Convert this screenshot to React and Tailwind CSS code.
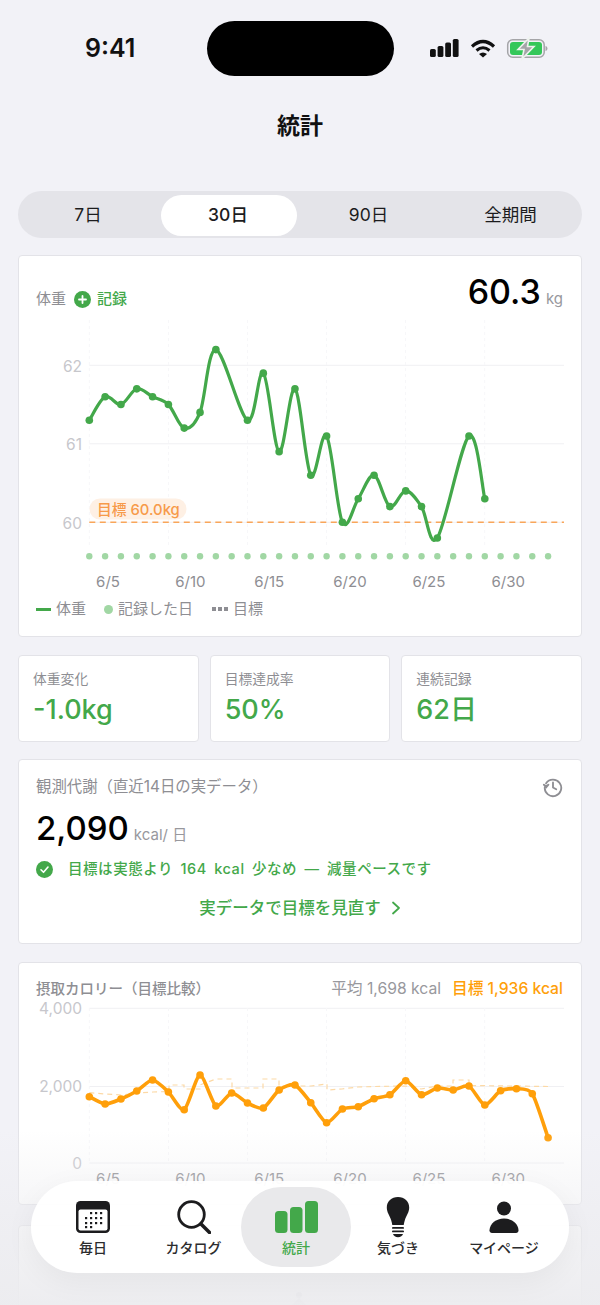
import React from 'react';

const GREEN = '#43a84a';
const ORANGE = '#ff9f0a';

const xAt = (i) => 89.3 + i * 15.82;

// catmull-rom through the points, like the chart lib's smooth line
const smoothPath = (pts, t = 0.5) => {
    let d = `M${pts[0][0]} ${pts[0][1]}`;
    for (let i = 0; i < pts.length - 1; i++) {
        const p0 = pts[i - 1] || pts[i];
        const p1 = pts[i];
        const p2 = pts[i + 1];
        const p3 = pts[i + 2] || p2;
        const k = t / 3;
        const c1x = p1[0] + (p2[0] - p0[0]) * k;
        const c1y = p1[1] + (p2[1] - p0[1]) * k;
        const c2x = p2[0] - (p3[0] - p1[0]) * k;
        const c2y = p2[1] - (p3[1] - p1[1]) * k;
        d += ` C${c1x.toFixed(1)} ${c1y.toFixed(1)} ${c2x.toFixed(1)} ${c2y.toFixed(1)} ${p2[0].toFixed(1)} ${p2[1].toFixed(1)}`;
    }
    return d;
};

const weightData = [
    [0, 61.3], [1, 61.6], [2, 61.5], [3, 61.7], [4, 61.6], [5, 61.5], [6, 61.2], [7, 61.4], [8, 62.2],
    [10, 61.3], [11, 61.9], [12, 60.9], [13, 61.7], [14, 60.6], [15, 61.1], [16, 60.0], [17, 60.3],
    [18, 60.6], [19, 60.2], [20, 60.4], [21, 60.2], [22, 59.8], [24, 61.1], [25, 60.3],
];
const weightPts = weightData.map(([i, v]) => [xAt(i), 522.3 - (v - 60) * 78.5]);

const calorieY = [
    1096.7, 1104, 1099, 1091, 1080, 1092, 1109.7, 1075, 1106, 1093, 1103, 1108, 1090, 1085, 1102.7,
    1122.7, 1109, 1106.7, 1098.7, 1094.7, 1080.7, 1094.7, 1088, 1090, 1086, 1105, 1090.7, 1088.7, 1093.7, 1137.7,
];
const caloriePts = calorieY.map((y, i) => [xAt(i), y]);

const targetLine =
    'M89.3 1092.7 L105 1094 L121 1095 L137 1093 L153 1092 L169 1091.5 V1085 H184 V1089 H200 V1085 L216 1079 H232 V1088 H263 V1079 H279 V1086 H311 L327 1084 V1090 L342 1089 L358 1087 L374 1086.5 L406 1086 L421 1089 L437 1086 H453 V1080 H469 V1085.5 L548 1086.5';

const gridX = [89.3, 168.4, 247.4, 326.5, 405.6, 484.7];
const dateLabels = ['6/5', '6/10', '6/15', '6/20', '6/25', '6/30'];

const ChartText = ({ x, y, anchor = 'start', size = 15.5, fill = '#c7c7cc', children }) => (
    <text x={x} y={y} textAnchor={anchor} fontSize={size} fill={fill}>{children}</text>
);

const WeightChart = () => (
    <svg className="absolute left-0 top-0" width="600" height="640" viewBox="0 0 600 640">
        {[365.3, 443.8, 522.3].map((y) => (
            <line key={y} x1="89.3" x2="564" y1={y} y2={y} stroke="#f0f0f3" />
        ))}
        {gridX.map((x) => (
            <line key={x} x1={x} x2={x} y1="320" y2="548" stroke="#f7f7f9" strokeDasharray="3 3" />
        ))}
        <ChartText x="82" y="371.5" anchor="end">62</ChartText>
        <ChartText x="82" y="450" anchor="end">61</ChartText>
        <ChartText x="82" y="528.5" anchor="end">60</ChartText>
        <line x1="89.3" x2="564" y1="522.3" y2="522.3" stroke="#f9a65a" strokeWidth="1.4" strokeDasharray="6 4.5" />
        <rect x="89.5" y="498.5" width="97" height="21" rx="10.5" fill="#fef0e4" />
        <text x="97" y="514.5" fontSize="14.8" fontWeight="500" fill="#f79a4a">目標 60.0kg</text>
        {Array.from({ length: 30 }, (_, i) => (
            <circle key={i} cx={xAt(i)} cy="556.3" r="3.2" fill="#a1d7a4" />
        ))}
        <path d={smoothPath(weightPts)} fill="none" stroke={GREEN} strokeWidth="3.2" strokeLinejoin="round" />
        {weightPts.map(([x, y]) => (
            <circle key={x} cx={x} cy={y} r="3.8" fill={GREEN} />
        ))}
        {dateLabels.map((label, i) => (
            <ChartText key={label} x={gridX[i] + 6.8} y="587" size="15" fill="#8e8e93">{label}</ChartText>
        ))}
    </svg>
);

const CalorieChart = () => (
    <svg className="absolute left-0 top-0" width="600" height="1305" viewBox="0 0 600 1305">
        {[1008.3, 1086.5, 1163].map((y) => (
            <line key={y} x1="89.3" x2="564" y1={y} y2={y} stroke="#f0f0f3" />
        ))}
        {gridX.map((x) => (
            <line key={x} x1={x} x2={x} y1="1008" y2="1163" stroke="#f7f7f9" strokeDasharray="3 3" />
        ))}
        <ChartText x="82" y="1014" anchor="end">4,000</ChartText>
        <ChartText x="82" y="1092" anchor="end">2,000</ChartText>
        <ChartText x="82" y="1169" anchor="end">0</ChartText>
        <path d={targetLine} fill="none" stroke="#fcd9a6" strokeWidth="1.2" strokeDasharray="5 4" />
        <path d={smoothPath(caloriePts, 0.35)} fill="none" stroke={ORANGE} strokeWidth="3.6" strokeLinejoin="round" />
        {caloriePts.map(([x, y]) => (
            <circle key={x} cx={x} cy={y} r="3.8" fill={ORANGE} />
        ))}
        {dateLabels.map((label, i) => (
            <ChartText key={label} x={gridX[i] + 6.8} y="1184" size="15" fill="#8e8e93">{label}</ChartText>
        ))}
        <circle cx="299" cy="1295" r="3" fill="#d8d8dc" />
        <path d="M292 1305 L299 1298 L306 1305" fill="#e0e0e4" />
    </svg>
);

const StatCard = ({ label, value }) => (
    <div className="h-[87px] rounded-[4px] border-[1.5px] border-[#e3e3e8] bg-white pl-[14px] pt-[13px]">
        <div className="text-[13.8px] leading-5 text-[#8e8e93]">{label}</div>
        <div className="mt-[5px] text-[27px] font-medium leading-8 text-[#43a84a]">{value}</div>
    </div>
);

const StatusBar = () => (
    <div className="relative h-[76px]">
        <div className="absolute left-[85px] top-[32px] text-[25px] font-semibold leading-8 text-[#111]">9:41</div>
        <div className="absolute left-[207px] top-[21px] h-[55px] w-[187px] rounded-[28px] bg-black" />
        <svg className="absolute left-[428px] top-[36px]" width="124" height="26" viewBox="0 0 124 26">
            <rect x="2" y="13" width="5.8" height="8" rx="1.6" fill="#111" />
            <rect x="9.6" y="10" width="5.8" height="11" rx="1.6" fill="#111" />
            <rect x="17.2" y="6.5" width="5.8" height="14.5" rx="1.6" fill="#111" />
            <rect x="24.8" y="3" width="5.8" height="18" rx="1.6" fill="#111" />
            <path d="M44 10.5 Q55 0.5 66 10.5" fill="none" stroke="#111" strokeWidth="3.2" />
            <path d="M48.5 14.5 Q55 9 61.5 14.5" fill="none" stroke="#111" strokeWidth="3" />
            <path d="M51 18 Q55 15 59 18 L55 21.5z" fill="#111" />
            <rect x="79.7" y="3.7" width="36.5" height="17.6" rx="5" fill="none" stroke="#a5a5a8" strokeWidth="1.5" />
            <rect x="82" y="6" width="32" height="13" rx="3" fill="#34c759" />
            <path d="M117.5 10v5c1.200-.3 2-1.300 2-2.500s-.8-2.200-2-2.500z" fill="#a5a5a8" />
            <path d="M101 2 90 13.500h6L94 23l12-12.500h-6.500z" fill="#a5a5a8" stroke="#eef3ee" strokeWidth="1.6" />
        </svg>
    </div>
);

const CalendarIcon = () => (
    <svg width="34" height="32" viewBox="0 0 34 32">
        <rect x="0" y="0" width="34" height="32" rx="4.5" fill="#1c1c1e" />
        <rect x="2.5" y="8.5" width="29" height="21" rx="2" fill="#fff" />
        {[[15, 12], [20, 12], [25, 12], [10, 17], [15, 17], [20, 17], [25, 17], [10, 22], [15, 22], [20, 22], [25, 22], [10, 26], [15, 26]].map(([x, y]) => (
            <rect key={`${x}-${y}`} x={x - 1} y={y - 1} width="2.200" height="2.200" fill="#1c1c1e" />
        ))}
    </svg>
);

const SearchIcon = () => (
    <svg width="34" height="34" viewBox="0 0 34 34" fill="none" stroke="#1c1c1e" strokeLinecap="round">
        <circle cx="14.500" cy="14.500" r="12.800" strokeWidth="2.800" />
        <path d="M24 24 32.500 32.500" strokeWidth="3.600" />
    </svg>
);

const BarsIcon = () => (
    <svg width="43" height="32" viewBox="0 0 43 32" fill="#43a84a">
        <rect x="0" y="10" width="12.500" height="22" rx="3.500" />
        <rect x="15" y="6" width="12.500" height="26" rx="3.500" />
        <rect x="30" y="0" width="13" height="32" rx="3.500" />
    </svg>
);

const BulbIcon = () => (
    <svg width="24" height="42" viewBox="0 0 24 42" fill="#1c1c1e">
        <path d="M12 1C5.500 1 .8 5.600.8 11.500c0 4.800 2.800 8 4.300 12.500.5 1.500.8 3 1.200 5h11.400c.4-2 .7-3.500 1.200-5 1.500-4.500 4.300-7.700 4.300-12.500C23.200 5.600 18.500 1 12 1z" />
        <rect x="6" y="31" width="12" height="1.800" rx=".9" />
        <rect x="6" y="34.500" width="12" height="1.800" rx=".9" />
        <path d="M7 38h10c-.5 2-2.500 3.200-5 3.200S7.500 40 7 38z" />
    </svg>
);

const PersonIcon = () => (
    <svg width="30" height="32" viewBox="0 0 30 32" fill="#1c1c1e">
        <circle cx="15" cy="7.500" r="7" />
        <path d="M15 17.500C7 17.500 1 22.500.5 29c-.1 1.800 1 3 2.500 3h24c1.500 0 2.600-1.200 2.500-3C29 22.500 23 17.500 15 17.500z" />
    </svg>
);

const NavItem = ({ icon, label, active, className }) => (
    <div className={`flex h-[80px] flex-col items-center rounded-[40px] pt-[9px] ${active ? 'bg-[#e9e9eb]' : ''} ${className}`}>
        <div className="flex h-[42px] items-center">{icon}</div>
        <div className={`text-[14px] font-medium leading-5 whitespace-nowrap ${active ? 'text-[#43a84a]' : 'text-[#2c2c2e]'}`}>{label}</div>
    </div>
);

const BottomNav = () => (
    <>
        <div className="absolute inset-x-0 bottom-0 h-[175px] bg-gradient-to-b from-[#ececef]/0 via-[#ececef]/55 to-[#ececef]/95" />
        <div className="absolute left-[31px] top-[1181px] flex h-[92px] w-[538px] items-center rounded-[46px] bg-white/95 pl-[11px] shadow-[0_8px_30px_rgba(0,0,0,0.05)]">
            <NavItem className="w-[102px]" icon={<CalendarIcon />} label="毎日" />
            <NavItem className="ml-[2px] w-[95px]" icon={<SearchIcon />} label="カタログ" />
            <NavItem className="w-[110px]" icon={<BarsIcon />} label="統計" active />
            <NavItem className="w-[94px]" icon={<BulbIcon />} label="気づき" />
            <NavItem className="w-[118px]" icon={<PersonIcon />} label="マイページ" />
        </div>
    </>
);

const App = () => {
    return (
        <div className="relative h-[1305px] w-[600px] overflow-hidden bg-[#f2f2f7] font-['Inter','Noto_Sans_CJK_JP',sans-serif] text-[#111]">
            <StatusBar />
            <div className="mt-[32px] text-center text-[23px] font-semibold leading-9 text-[#111]">統計</div>

            <div className="mx-[18px] mt-[47px] flex h-[47px] items-center rounded-[24px] bg-[#e4e4e9] px-[3px] pt-[1px] text-[17.5px] text-[#1c1c1e]">
                <div className="w-[140px] pr-[6px] text-center">7日</div>
                <div className="flex h-[41px] w-[136px] items-center justify-center rounded-[21px] bg-white pr-[2px] font-medium">30日</div>
                <div className="w-[145px] pr-[2px] text-center">90日</div>
                <div className="w-[137px] text-center">全期間</div>
            </div>

            <div className="mx-[18px] mt-[17px] h-[382px] rounded-[4px] border-[1.5px] border-[#e3e3e8] bg-white">
                <div className="relative z-10 flex items-start justify-between pl-[17px] pr-[18px] pt-[16px]">
                    <div className="mt-[17px] flex items-center text-[15px] leading-5 text-[#8e8e93]">
                        <span>体重</span>
                        <svg className="ml-[8px]" width="17" height="17" viewBox="0 0 17 17">
                            <circle cx="8.500" cy="8.500" r="8.500" fill="#43a84a" />
                            <path d="M8.500 5v7M5 8.500h7" stroke="#fff" strokeWidth="1.800" strokeLinecap="round" />
                        </svg>
                        <span className="ml-[6px] font-medium text-[#43a84a]">記録</span>
                    </div>
                    <div className="flex items-baseline">
                        <span className="text-[34px] font-medium leading-10 text-black">60.3</span>
                        <span className="ml-[5px] text-[15px] text-[#98989d]">kg</span>
                    </div>
                </div>
                <div className="relative z-10 mt-[287px] flex items-center pl-[17px] text-[15px] leading-5 text-[#8e8e93]">
                    <span className="h-[3px] w-[15px] bg-[#43a84a]" />
                    <span className="ml-[5px]">体重</span>
                    <span className="ml-[18px] h-[9px] w-[9px] rounded-full bg-[#a1d7a4]" />
                    <span className="ml-[5px]">記録した日</span>
                    <span className="ml-[19px] flex gap-[2px]">
                        <i className="h-[4px] w-[4px] bg-[#8e8e93]" />
                        <i className="h-[4px] w-[4px] bg-[#8e8e93]" />
                        <i className="h-[4px] w-[4px] bg-[#8e8e93]" />
                    </span>
                    <span className="ml-[5px]">目標</span>
                </div>
            </div>

            <div className="mx-[18px] mt-[18px] grid grid-cols-3 gap-[11px]">
                <StatCard label="体重変化" value="-1.0kg" />
                <StatCard label="目標達成率" value="50%" />
                <StatCard label="連続記録" value="62日" />
            </div>

            <div className="mx-[18px] mt-[17px] h-[185px] rounded-[4px] border-[1.5px] border-[#e3e3e8] bg-white pl-[17px] pr-[17px] pt-[16px]">
                <div className="flex items-center justify-between">
                    <div className="text-[15.4px] leading-5 text-[#8e8e93]">観測代謝（直近14日の実データ）</div>
                    <svg width="22" height="22" viewBox="0 0 24 24" fill="none" stroke="#8e8e93" strokeWidth="2" strokeLinecap="round" strokeLinejoin="round">
                        <path d="M4.500 8A9 9 0 1 1 3 12.500" />
                        <path d="M2 9.500 4.500 12.500 7 9.500" fill="#8e8e93" />
                        <path d="M12 7v5.500l3.500 2" />
                    </svg>
                </div>
                <div className="mt-[10px] flex items-baseline">
                    <span className="text-[33px] font-medium leading-10 text-black">2,090</span>
                    <span className="ml-[5px] text-[15px] text-[#98989d]">kcal/ 日</span>
                </div>
                <div className="mt-[11px] flex items-center text-[14.5px] font-medium leading-5 tracking-[0.55px] text-[#43a84a] [word-spacing:3px]">
                    <svg width="17" height="17" viewBox="0 0 17 17">
                        <circle cx="8.500" cy="8.500" r="8.500" fill="#43a84a" />
                        <path d="M5 8.800 7.500 11.300 12 6" fill="none" stroke="#fff" strokeWidth="1.600" strokeLinecap="round" strokeLinejoin="round" />
                    </svg>
                    <span className="ml-[15px]">目標は実態より 164 kcal 少なめ — 減量ペースです</span>
                </div>
                <div className="mt-[19px] flex items-center justify-center text-[16.5px] font-medium leading-5 text-[#43a84a]">
                    <span>実データで目標を見直す</span>
                    <svg className="ml-[10px]" width="10" height="14" viewBox="0 0 10 14" fill="none" stroke="#43a84a" strokeWidth="1.800" strokeLinecap="round" strokeLinejoin="round">
                        <path d="M2 1.500 8 7 2 12.500" />
                    </svg>
                </div>
            </div>

            <div className="mx-[18px] mt-[18px] h-[243px] rounded-[4px] border-[1.5px] border-[#e3e3e8] bg-white pl-[17px] pr-[18px] pt-[16px]">
                <div className="flex items-center justify-between text-[15.7px] leading-5">
                    <span className="text-[14.5px] font-medium text-[#8e8e93]">摂取カロリー（目標比較）</span>
                    <span className="text-[#98989d]">
                        平均 1,698 kcal
                        <span className="ml-[11px] font-medium text-[#ff9f0a]">目標 1,936 kcal</span>
                    </span>
                </div>
            </div>
            <div className="mx-[18px] mt-[20px] h-[200px] rounded-[4px] border-[1.5px] border-[#e3e3e8] bg-white" />

            <WeightChart />
            <CalorieChart />
            <BottomNav />
        </div>
    );
};

export default App;
